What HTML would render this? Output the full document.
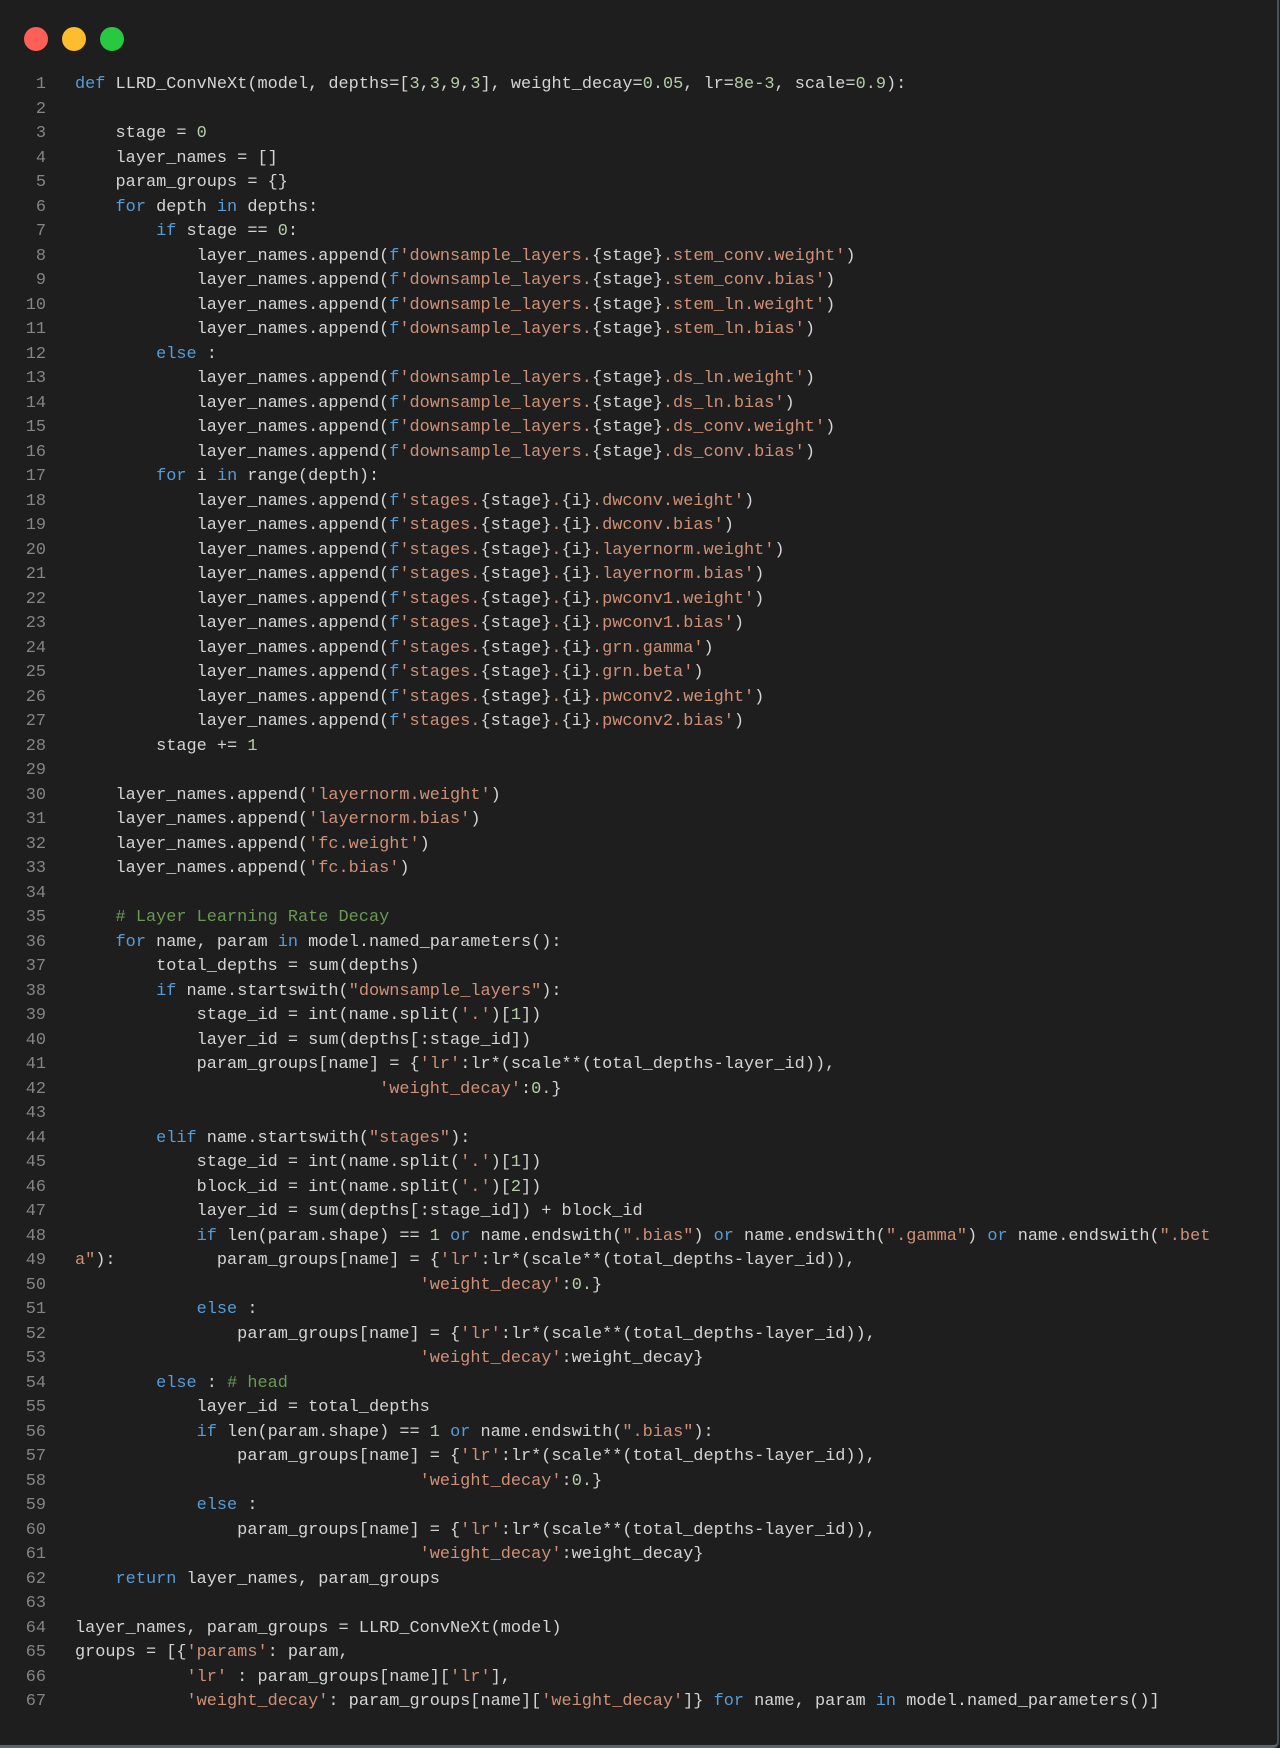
<!DOCTYPE html>
<html><head><meta charset="utf-8"><style>
html,body{margin:0;padding:0;background:#1e1e1e;}
body{width:1280px;height:1748px;position:relative;overflow:hidden;}
.frame{position:absolute;left:0;top:0;width:1277px;height:1745px;background:#1e1e1e;border-right:2px solid #4b5158;border-bottom:3px solid #5c636b;border-bottom-right-radius:6px;}
.dot{position:absolute;top:27px;width:24px;height:24px;border-radius:50%;}
pre{margin:0;position:absolute;top:73px;left:0;font-family:"Liberation Mono",monospace;font-size:16.9px;line-height:24.5px;color:#d4d4d4;}
.ln{position:absolute;left:0;width:46px;text-align:right;color:#858585;}
.code{position:absolute;left:75px;white-space:pre;}
.k{color:#569cd6}.s{color:#ce9178}.n{color:#b5cea8}.c{color:#6a9955}
</style></head><body><div class="frame">
<div class="dot" style="left:24px;background:#fe5f57"></div>
<div class="dot" style="left:62px;background:#febc2e"></div>
<div class="dot" style="left:100px;background:#28c840"></div>
<pre><span class="ln">1
2
3
4
5
6
7
8
9
10
11
12
13
14
15
16
17
18
19
20
21
22
23
24
25
26
27
28
29
30
31
32
33
34
35
36
37
38
39
40
41
42
43
44
45
46
47
48
49
50
51
52
53
54
55
56
57
58
59
60
61
62
63
64
65
66
67</span><span class="code"><span class="k">def</span> LLRD_ConvNeXt(model, depths=[<span class="n">3</span>,<span class="n">3</span>,<span class="n">9</span>,<span class="n">3</span>], weight_decay=<span class="n">0.05</span>, lr=<span class="n">8e-3</span>, scale=<span class="n">0.9</span>):

    stage = <span class="n">0</span>
    layer_names = []
    param_groups = {}
    <span class="k">for</span> depth <span class="k">in</span> depths:
        <span class="k">if</span> stage == <span class="n">0</span>:
            layer_names.append(<span class="k">f</span><span class="s">'downsample_layers.</span>{stage}<span class="s">.stem_conv.weight'</span>)
            layer_names.append(<span class="k">f</span><span class="s">'downsample_layers.</span>{stage}<span class="s">.stem_conv.bias'</span>)
            layer_names.append(<span class="k">f</span><span class="s">'downsample_layers.</span>{stage}<span class="s">.stem_ln.weight'</span>)
            layer_names.append(<span class="k">f</span><span class="s">'downsample_layers.</span>{stage}<span class="s">.stem_ln.bias'</span>)
        <span class="k">else</span> :
            layer_names.append(<span class="k">f</span><span class="s">'downsample_layers.</span>{stage}<span class="s">.ds_ln.weight'</span>)
            layer_names.append(<span class="k">f</span><span class="s">'downsample_layers.</span>{stage}<span class="s">.ds_ln.bias'</span>)
            layer_names.append(<span class="k">f</span><span class="s">'downsample_layers.</span>{stage}<span class="s">.ds_conv.weight'</span>)
            layer_names.append(<span class="k">f</span><span class="s">'downsample_layers.</span>{stage}<span class="s">.ds_conv.bias'</span>)
        <span class="k">for</span> i <span class="k">in</span> range(depth):
            layer_names.append(<span class="k">f</span><span class="s">'stages.</span>{stage}<span class="s">.</span>{i}<span class="s">.dwconv.weight'</span>)
            layer_names.append(<span class="k">f</span><span class="s">'stages.</span>{stage}<span class="s">.</span>{i}<span class="s">.dwconv.bias'</span>)
            layer_names.append(<span class="k">f</span><span class="s">'stages.</span>{stage}<span class="s">.</span>{i}<span class="s">.layernorm.weight'</span>)
            layer_names.append(<span class="k">f</span><span class="s">'stages.</span>{stage}<span class="s">.</span>{i}<span class="s">.layernorm.bias'</span>)
            layer_names.append(<span class="k">f</span><span class="s">'stages.</span>{stage}<span class="s">.</span>{i}<span class="s">.pwconv1.weight'</span>)
            layer_names.append(<span class="k">f</span><span class="s">'stages.</span>{stage}<span class="s">.</span>{i}<span class="s">.pwconv1.bias'</span>)
            layer_names.append(<span class="k">f</span><span class="s">'stages.</span>{stage}<span class="s">.</span>{i}<span class="s">.grn.gamma'</span>)
            layer_names.append(<span class="k">f</span><span class="s">'stages.</span>{stage}<span class="s">.</span>{i}<span class="s">.grn.beta'</span>)
            layer_names.append(<span class="k">f</span><span class="s">'stages.</span>{stage}<span class="s">.</span>{i}<span class="s">.pwconv2.weight'</span>)
            layer_names.append(<span class="k">f</span><span class="s">'stages.</span>{stage}<span class="s">.</span>{i}<span class="s">.pwconv2.bias'</span>)
        stage += <span class="n">1</span>

    layer_names.append(<span class="s">'layernorm.weight'</span>)
    layer_names.append(<span class="s">'layernorm.bias'</span>)
    layer_names.append(<span class="s">'fc.weight'</span>)
    layer_names.append(<span class="s">'fc.bias'</span>)

    <span class="c"># Layer Learning Rate Decay</span>
    <span class="k">for</span> name, param <span class="k">in</span> model.named_parameters():
        total_depths = sum(depths)
        <span class="k">if</span> name.startswith(<span class="s">"downsample_layers"</span>):
            stage_id = int(name.split(<span class="s">'.'</span>)[<span class="n">1</span>])
            layer_id = sum(depths[:stage_id])
            param_groups[name] = {<span class="s">'lr'</span>:lr*(scale**(total_depths-layer_id)),
                              <span class="s">'weight_decay'</span>:<span class="n">0.</span>}

        <span class="k">elif</span> name.startswith(<span class="s">"stages"</span>):
            stage_id = int(name.split(<span class="s">'.'</span>)[<span class="n">1</span>])
            block_id = int(name.split(<span class="s">'.'</span>)[<span class="n">2</span>])
            layer_id = sum(depths[:stage_id]) + block_id
            <span class="k">if</span> len(param.shape) == <span class="n">1</span> <span class="k">or</span> name.endswith(<span class="s">".bias"</span>) <span class="k">or</span> name.endswith(<span class="s">".gamma"</span>) <span class="k">or</span> name.endswith(<span class="s">".bet</span>
<span class="s">a"</span>):          param_groups[name] = {<span class="s">'lr'</span>:lr*(scale**(total_depths-layer_id)),
                                  <span class="s">'weight_decay'</span>:<span class="n">0.</span>}
            <span class="k">else</span> :
                param_groups[name] = {<span class="s">'lr'</span>:lr*(scale**(total_depths-layer_id)),
                                  <span class="s">'weight_decay'</span>:weight_decay}
        <span class="k">else</span> : <span class="c"># head</span>
            layer_id = total_depths
            <span class="k">if</span> len(param.shape) == <span class="n">1</span> <span class="k">or</span> name.endswith(<span class="s">".bias"</span>):
                param_groups[name] = {<span class="s">'lr'</span>:lr*(scale**(total_depths-layer_id)),
                                  <span class="s">'weight_decay'</span>:<span class="n">0.</span>}
            <span class="k">else</span> :
                param_groups[name] = {<span class="s">'lr'</span>:lr*(scale**(total_depths-layer_id)),
                                  <span class="s">'weight_decay'</span>:weight_decay}
    <span class="k">return</span> layer_names, param_groups

layer_names, param_groups = LLRD_ConvNeXt(model)
groups = [{<span class="s">'params'</span>: param,
           <span class="s">'lr'</span> : param_groups[name][<span class="s">'lr'</span>],
           <span class="s">'weight_decay'</span>: param_groups[name][<span class="s">'weight_decay'</span>]} <span class="k">for</span> name, param <span class="k">in</span> model.named_parameters()]</span></pre>
</div></body></html>
